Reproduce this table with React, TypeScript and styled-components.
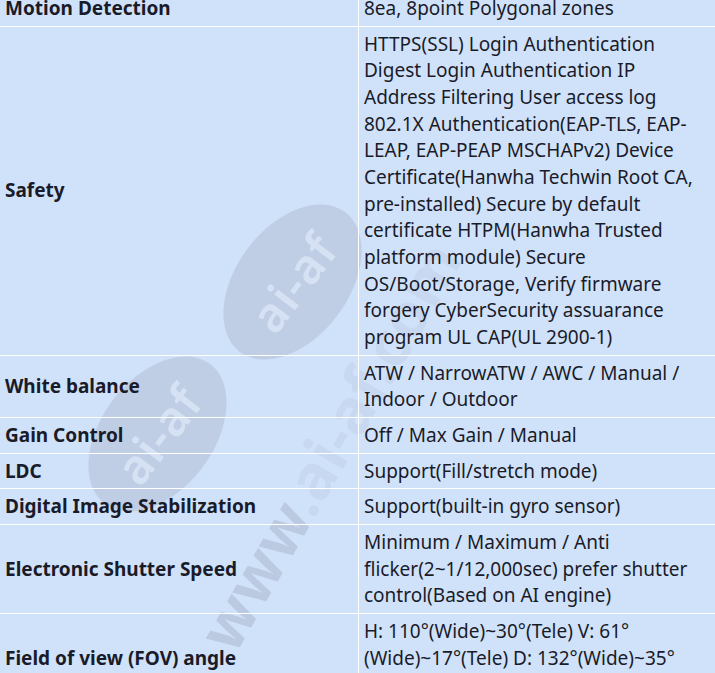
import React from "react";
import styled, { createGlobalStyle } from "styled-components";

const Global = createGlobalStyle`
  html, body { margin: 0; padding: 0; background: #d0e2fa; }
  body { font-family: "Noto Sans", "Open Sans", sans-serif; overflow: hidden; }
`;

const Page = styled.div`
  position: relative;
  width: 715px;
  height: 673px;
  overflow: hidden;
  background: #d0e2fa;
`;

const Table = styled.table`
  position: relative;
  z-index: 1;
  width: 715px;
  margin-top: -9px;
  border-collapse: collapse;
  table-layout: fixed;
  background: transparent;
  color: #1a1b29;
  font-size: 19px;
  line-height: 26.67px;
`;

const Row = styled.tr`
  border-bottom: 1px solid #ffffff;
`;

const Label = styled.td`
  width: 348px;
  padding: 4px 5px;
  font-weight: 700;
  vertical-align: middle;
  border-right: 1px solid #ffffff;
  white-space: nowrap;
`;

const Value = styled.td`
  padding: 4px 12px 4px 5px;
  vertical-align: middle;
`;

const Watermark = styled.div`
  position: absolute;
  inset: 0;
  z-index: 0;
  pointer-events: none;
`;

const Blob = styled.div<{ $x: number; $y: number }>`
  position: absolute;
  left: ${(p) => p.$x}px;
  top: ${(p) => p.$y}px;
  width: 175px;
  height: 112px;
  border-radius: 50%;
  background: #bfcee5;
  transform: rotate(-53deg);
  display: flex;
  align-items: center;
  justify-content: center;
  color: #d6e2f4;
  font-family: "Noto Sans", sans-serif;
  font-weight: 600;
  font-size: 48px;
  letter-spacing: 1px;
`;

const Mark = styled.div`
  position: absolute;
  left: 214px;
  top: 602px;
  transform: rotate(-60deg);
  transform-origin: left center;
  color: #bccae1;
  font-family: "Noto Sans", sans-serif;
  font-weight: 700;
  font-size: 62px;
  white-space: nowrap;
`;

const Faint = styled.span`
  color: #c8d8f0;
`;

const rows: [string, string][] = [
  ["Motion Detection", "8ea, 8point Polygonal zones"],
  [
    "Safety",
    "HTTPS(SSL) Login Authentication Digest Login Authentication IP Address Filtering User access log 802.1X Authentication(EAP-TLS, EAP-LEAP, EAP-PEAP MSCHAPv2) Device Certificate(Hanwha Techwin Root CA, pre-installed) Secure by default certificate HTPM(Hanwha Trusted platform module) Secure OS/Boot/Storage, Verify firmware forgery CyberSecurity assuarance program UL CAP(UL 2900-1)",
  ],
  ["White balance", "ATW / NarrowATW / AWC / Manual / Indoor / Outdoor"],
  ["Gain Control", "Off / Max Gain / Manual"],
  ["LDC", "Support(Fill/stretch mode)"],
  ["Digital Image Stabilization", "Support(built-in gyro sensor)"],
  [
    "Electronic Shutter Speed",
    "Minimum / Maximum / Anti flicker(2~1/12,000sec) prefer shutter control(Based on AI engine)",
  ],
  [
    "Field of view (FOV) angle",
    "H: 110°(Wide)~30°(Tele) V: 61° (Wide)~17°(Tele) D: 132°(Wide)~35° (Tele)",
  ],
];

export default function App() {
  return (
    <Page>
      <Global />
      <Watermark>
        <Blob $x={205} $y={226}>ai-af</Blob>
        <Blob $x={70} $y={378}>ai-af</Blob>
        <Mark>
          www<Faint>.ai-af.com</Faint>
        </Mark>
      </Watermark>
      <Table>
        <tbody>
          {rows.map(([k, v]) => (
            <Row key={k}>
              <Label>{k}</Label>
              <Value>{v}</Value>
            </Row>
          ))}
        </tbody>
      </Table>
    </Page>
  );
}
